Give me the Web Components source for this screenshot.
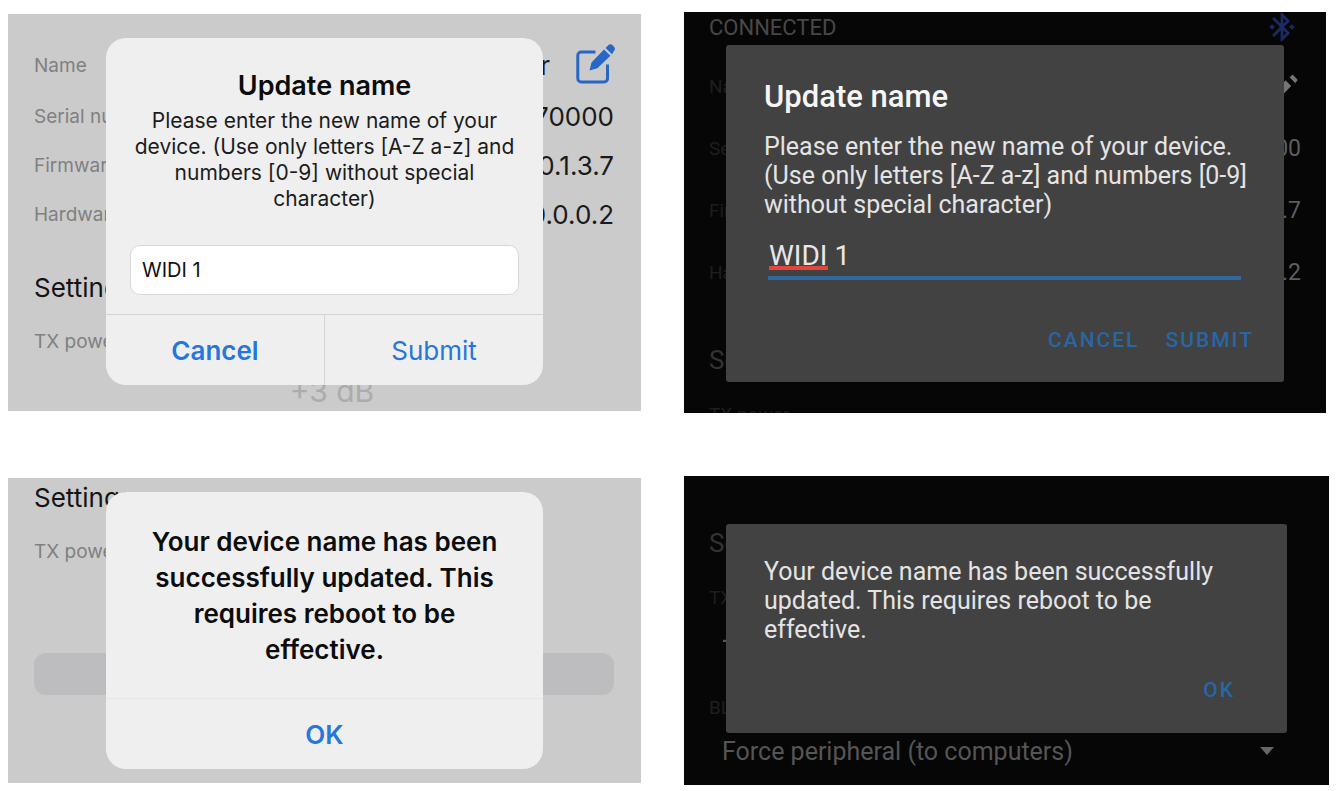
<!DOCTYPE html>
<html lang="en">
<head>
<meta charset="utf-8">
<meta name="viewport" content="width=device-width, initial-scale=1">
<title>Update device name</title>
<style>
  body { margin: 0; background: #fff; }
</style>
</head>
<body>
<dialog-gallery>
  <phone-screen theme="ios">
    <setting-row slot="backdrop" label="Name" value="Master" tall><edit-icon kind="box" slot="action"></edit-icon></setting-row>
    <setting-row slot="backdrop" label="Serial number" value="70000"></setting-row>
    <setting-row slot="backdrop" label="Firmware" value="0.1.3.7"></setting-row>
    <setting-row slot="backdrop" label="Hardware" value="0.0.0.2"></setting-row>
    <section-title slot="backdrop" spaced>Settings</section-title>
    <setting-row slot="backdrop" label="TX power" section></setting-row>
    <picker-value slot="backdrop">+3 dB</picker-value>
    <ios-alert heading="Update name" value="WIDI 1" actions="Cancel,Submit">Please enter the new name of your<br>device. (Use only letters [A-Z a-z] and<br>numbers [0-9] without special<br>character)</ios-alert>
  </phone-screen>

  <phone-screen theme="android" inset>
    <status-header slot="backdrop">CONNECTED</status-header>
    <setting-row slot="backdrop" label="Name"><edit-icon kind="pencil" slot="action"></edit-icon></setting-row>
    <setting-row slot="backdrop" label="Serial" value="0000"></setting-row>
    <setting-row slot="backdrop" label="Firmware" value="0.1.3.7"></setting-row>
    <setting-row slot="backdrop" label="Hardware" value="0.0.0.2"></setting-row>
    <section-title slot="backdrop" spaced>Settings</section-title>
    <setting-row slot="backdrop" label="TX power" section></setting-row>
    <android-alert heading="Update name" value="WIDI 1" actions="CANCEL,SUBMIT">Please enter the new name of your device.<br>(Use only letters [A-Z a-z] and numbers [0-9]<br>without special character)</android-alert>
  </phone-screen>

  <phone-screen theme="ios" scrolled>
    <section-title slot="backdrop">Settings</section-title>
    <setting-row slot="backdrop" label="TX power" section></setting-row>
    <wide-button slot="backdrop"></wide-button>
    <ios-alert heading="" actions="OK" strong>Your device name has been<br>successfully updated. This<br>requires reboot to be<br>effective.</ios-alert>
  </phone-screen>

  <phone-screen theme="android" scrolled>
    <section-title slot="backdrop">Settings</section-title>
    <setting-row slot="backdrop" label="TX power" section></setting-row>
    <drop-down slot="backdrop" label="TX power" value="+3 dB"></drop-down>
    <setting-row slot="backdrop" label="BLE role" section spaced></setting-row>
    <drop-down slot="backdrop" label="BLE role" value="Force peripheral (to computers)"></drop-down>
    <android-alert actions="OK" notice>Your device name has been successfully<br>updated. This requires reboot to be<br>effective.</android-alert>
  </phone-screen>
</dialog-gallery>

<script>
const define = (name, render) => customElements.define(name, class extends HTMLElement {
  constructor() {
    super();
    this.attachShadow({ mode: 'open' });
  }
  connectedCallback() {
    if (this.shadowRoot.childNodes.length) return;
    const t = document.createElement('template');
    t.innerHTML = '<style>*{box-sizing:border-box}</style>' + render(this);
    this.shadowRoot.append(t.content.cloneNode(true));
  }
});
const attr = (el, name) => el.getAttribute(name) || '';

/* Two-column sheet of screens */
define('dialog-gallery', () => `
  <style>
    :host { display: grid; grid-template-columns: 633fr 645fr; column-gap: 43px; row-gap: 63px;
            align-items: center; padding: 12px 10px 6px 8px; box-sizing: border-box; }
  </style>
  <slot></slot>`);

/* One screen: dimmed settings page with an alert stacked over it */
define('phone-screen', () => `
  <style>
    :host { display: grid; overflow: hidden; box-sizing: border-box; }
    :host([theme=ios]) {
      font-family: Inter, "Liberation Sans", sans-serif; background: #cbcbcb;
      --label: #808082; --label-size: 19px; --value: #1a1a1a; --value-size: 26px;
      --row: 49px; --tall: 54px; --section-row: 56px;
      --title: #141414; --title-size: 26px; --title-gap: 24px; --pad: 24px 27px 0 26px; }
    :host([theme=android]) {
      font-family: Roboto, "Liberation Sans", sans-serif; background: #060606;
      --label: #1e1e1e; --label-size: 19px; --value: #5e5e5e; --value-size: 23px;
      --row: 62px; --section-row: 58px;
      --title: #333; --title-size: 26px; --title-gap: 32px; --pad: 0 25px; }
    :host([inset]) { margin-right: 3px; }
    :host([theme=ios][scrolled]) { --pad: 0 27px 0 26px; }
    :host([theme=ios][scrolled]) .back { margin-top: -5px; }
    :host([theme=android][scrolled]) { --pad: 42px 25px 0; --value: #555; }
    .back, .front { grid-area: 1 / 1; min-width: 0; }
    .back { contain: size; padding: var(--pad); }
    .front { position: relative; }
  </style>
  <div class="back"><slot name="backdrop"></slot></div>
  <div class="front"><slot></slot></div>`);

define('setting-row', el => `
  <style>
    :host { display: flex; align-items: center; justify-content: space-between;
            height: var(--row); white-space: nowrap; }
    :host([tall]) { height: var(--tall); }
    :host([section]) { height: var(--section-row); }
    :host([spaced]) { margin-top: 22px; }
    .label { color: var(--label); font-size: var(--label-size); }
    .end { display: flex; align-items: center; gap: 26px; color: var(--value); font-size: var(--value-size); }
  </style>
  <span class="label">${attr(el, 'label')}</span>
  <span class="end">${attr(el, 'value') ? `<span>${attr(el, 'value')}</span>` : ''}<slot name="action"></slot></span>`);

define('section-title', () => `
  <style>
    :host { display: block; color: var(--title); font-size: var(--title-size); line-height: 50px; }
    :host([spaced]) { margin-top: var(--title-gap); }
    h2 { margin: 0; font: inherit; }
  </style>
  <h2><slot></slot></h2>`);

define('picker-value', () => `
  <style>
    :host { display: block; text-align: center; padding-left: 16px; color: #acacac; font-size: 30px; line-height: 44px; }
  </style>
  <slot></slot>`);

define('wide-button', () => `
  <style>
    :host { display: block; margin-top: 74px; }
    button { display: block; width: 100%; height: 42px; border: 0; border-radius: 12px; background: #bdbdc0; }
  </style>
  <button type="button" aria-label="Apply"></button>`);

define('status-header', () => `
  <style>
    :host { display: flex; justify-content: space-between; align-items: center; height: 30px;
            margin-bottom: 13px; padding-right: 2px; color: #484848; font-size: 22px; }
    svg { width: 34px; height: 34px; fill: #1b2a63; }
  </style>
  <span><slot></slot></span>
  <svg viewBox="0 0 24 24" aria-hidden="true"><path d="M7 12l-2-2-2 2 2 2 2-2zm10.71-4.29L12 2h-1v7.59L6.41 5 5 6.41 10.59 12 5 17.59 6.41 19 11 14.41V22h1l5.71-5.71-4.3-4.29 4.3-4.29zM13 5.83l1.88 1.88L13 9.59V5.83zm1.88 10.46L13 18.17v-3.76l1.88 1.88zM19 10l-2 2 2 2 2-2-2-2z"/></svg>`);

define('edit-icon', el => `
  <style>
    :host { display: block; }
    button { display: block; padding: 0; border: 0; background: none; }
    svg { display: block; overflow: visible; }
    .box { width: 38px; height: 40px; color: #2867c6; }
    .pencil { width: 28px; height: 28px; color: #757575; }
  </style>
  <button type="button" aria-label="Edit name">${attr(el, 'kind') === 'box'
    ? `<svg class="box" viewBox="0 0 38 40"><path d="M19.5 7H5.2a3.4 3.4 0 0 0-3.4 3.400v23.200a3.400 3.400 0 0 0 3.400 3.400h22.900a3.400 3.400 0 0 0 3.400-3.400V19.500" fill="none" stroke="currentColor" stroke-width="3"/><path fill="currentColor" d="M13.500 25.600l2-8.200L28 4.600l6.400 6.200L21.400 23.200zM29.600 3l2.400-2.500a3.400 3.400 0 0 1 4.800 0l1 1a3.400 3.400 0 0 1 0 4.800L36 9.200z"/></svg>`
    : `<svg class="pencil" viewBox="0 0 24 24"><path fill="currentColor" d="M2 18.250V22h3.750L15.600 12.100l-4.950-4.950L2 18.250zM20.710 7.600c.39-.39.39-1.020 0-1.410l-3.340-3.340c-.39-.39-1.020-.39-1.410 0l-1.630 1.830 4.750 4.750 1.630-1.830z"/></svg>`}</button>`);

define('drop-down', el => `
  <style>
    :host { display: flex; align-items: center; height: 30px; padding: 0 30px 0 13px; }
    select { flex: 1; min-width: 0; padding: 0; border: 0; background: none; appearance: none;
             color: var(--value); opacity: 1; font: 25px Roboto, "Liberation Sans", sans-serif; }
    svg { width: 14px; height: 8px; fill: #666; }
  </style>
  <select aria-label="${attr(el, 'label')}"><option>${attr(el, 'value')}</option></select>
  <svg viewBox="0 0 14 8" aria-hidden="true"><path d="M0 0h14L7 8z"/></svg>`);

define('ios-alert', el => {
  const actions = attr(el, 'actions').split(',');
  const field = attr(el, 'value');
  return `
  <style>
    :host { display: block; margin: 24px 98px 26px; border-radius: 20px; background: #efefef;
            text-align: center; overflow: hidden; }
    :host([strong]) { margin: 14px 98px; }
    .text { padding: 32px 24px 0; }
    h1 { margin: 0 0 6px; font-size: 27px; font-weight: 600; line-height: 32px; color: #0c0c0c; }
    .msg { margin: 0; font-size: 21px; line-height: 26px; color: #1c1c1c; white-space: nowrap; }
    :host([strong]) .msg { font-size: 26px; font-weight: 600; line-height: 36px; color: #0c0c0c; padding-bottom: 30px; }
    input { display: block; width: 100%; height: 50px; margin: 33px 0 19px; padding: 0 11px;
            border: 1px solid #d8d8d8; border-radius: 10px; background: #fff; color: #111;
            font: 20px Inter, "Liberation Sans", sans-serif; outline: 0; }
    .actions { display: flex; border-top: 1px solid #d4d4d4; }
    :host([strong]) .actions { border-color: #e6e6e6; }
    button { flex: 1; height: 70px; padding: 0; border: 0; background: none; color: #2676dc;
             font: 26px Inter, "Liberation Sans", sans-serif; }
    button:first-child { font-weight: 600; }
    button + button { border-left: 1px solid #d4d4d4; }
  </style>
  <div class="text">
    ${attr(el, 'heading') ? `<h1 id="t">${attr(el, 'heading')}</h1>` : ''}
    <p class="msg"><slot></slot></p>
    ${field ? `<input type="text" aria-labelledby="t" value="${field}" spellcheck="false">` : ''}
  </div>
  <div class="actions">${actions.map(a => `<button type="button">${a}</button>`).join('')}</div>`;
});

define('android-alert', el => {
  const actions = attr(el, 'actions').split(',');
  const field = attr(el, 'value');
  return `
  <style>
    :host { display: block; margin: 33px 42px 31px; padding: 33px 38px 20px; border-radius: 3px; background: #424242; }
    :host([notice]) { margin: 48px 42px 52px; padding-bottom: 21px; }
    h1 { margin: 0 0 16px; font-size: 31px; font-weight: 500; line-height: 38px; color: #f6f6f6; }
    .msg { margin: 0; font-size: 25px; line-height: 29px; color: #e4e4e4; white-space: nowrap; }
    .field { position: relative; margin: 11px 5px 0 4px; border-bottom: 4px solid #2f679f; }
    input { display: block; width: 100%; height: 46px; padding: 4px 0 0 1px; border: 0; background: none; color: #e8e8e8;
            font: 28px Roboto, "Liberation Sans", sans-serif; outline: 0; }
    /* spell-check mark under the first word */
    .mark { position: absolute; left: 1px; bottom: 6px; width: 59px; height: 4px; background: #e5453f; }
    .actions { display: flex; justify-content: flex-end; gap: 26px; margin: 38px -8px 0 0; }
    :host([notice]) .actions { margin: 24px 14px 0 0; }
    button { height: 44px; padding: 0; border: 0; background: none; color: #2a66a2;
             font: 500 21px Roboto, "Liberation Sans", sans-serif; letter-spacing: 2px; }
  </style>
  ${attr(el, 'heading') ? `<h1 id="t">${attr(el, 'heading')}</h1>` : ''}
  <p class="msg"><slot></slot></p>
  ${field ? `<div class="field"><input type="text" aria-labelledby="t" value="${field}" spellcheck="false"><span class="mark"></span></div>` : ''}
  <div class="actions">${actions.map(a => `<button type="button">${a}</button>`).join('')}</div>`;
});
</script>
</body>
</html>
